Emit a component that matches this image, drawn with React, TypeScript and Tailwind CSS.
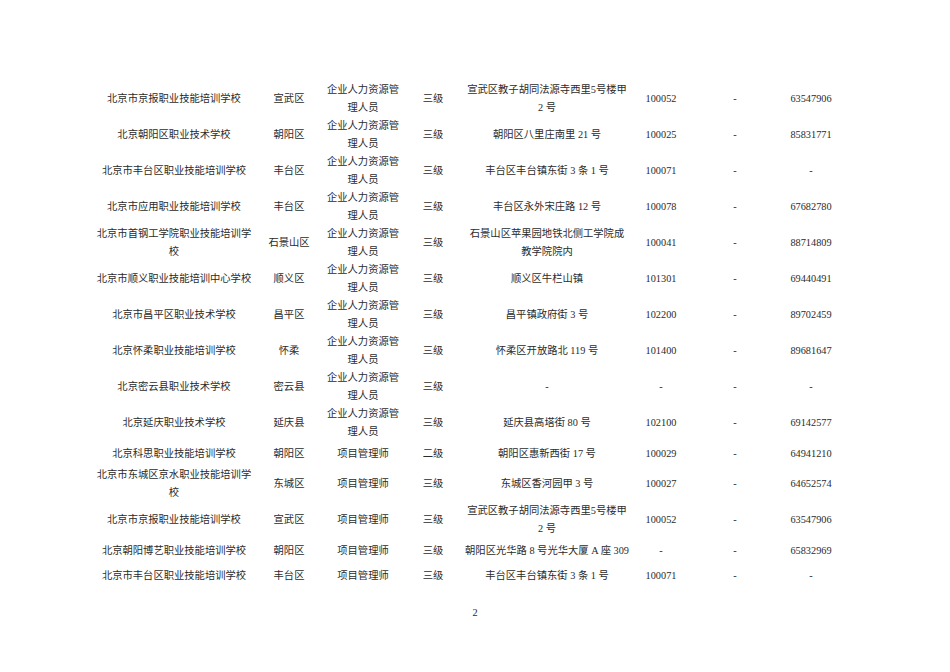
import React from "react";

const HR = ["企业人力资源管", "理人员"];
const PM = ["项目管理师"];

const rows: string[][][] = [
  [["北京市京报职业技能培训学校"], ["宣武区"], HR, ["三级"], ["宣武区教子胡同法源寺西里5号楼甲", "2 号"], ["100052"], ["-"], ["63547906"]],
  [["北京朝阳区职业技术学校"], ["朝阳区"], HR, ["三级"], ["朝阳区八里庄南里 21 号"], ["100025"], ["-"], ["85831771"]],
  [["北京市丰台区职业技能培训学校"], ["丰台区"], HR, ["三级"], ["丰台区丰台镇东街 3 条 1 号"], ["100071"], ["-"], ["-"]],
  [["北京市应用职业技能培训学校"], ["丰台区"], HR, ["三级"], ["丰台区永外宋庄路 12 号"], ["100078"], ["-"], ["67682780"]],
  [["北京市首钢工学院职业技能培训学", "校"], ["石景山区"], HR, ["三级"], ["石景山区苹果园地铁北侧工学院成", "教学院院内"], ["100041"], ["-"], ["88714809"]],
  [["北京市顺义职业技能培训中心学校"], ["顺义区"], HR, ["三级"], ["顺义区牛栏山镇"], ["101301"], ["-"], ["69440491"]],
  [["北京市昌平区职业技术学校"], ["昌平区"], HR, ["三级"], ["昌平镇政府街 3 号"], ["102200"], ["-"], ["89702459"]],
  [["北京怀柔职业技能培训学校"], ["怀柔"], HR, ["三级"], ["怀柔区开放路北 119 号"], ["101400"], ["-"], ["89681647"]],
  [["北京密云县职业技术学校"], ["密云县"], HR, ["三级"], ["-"], ["-"], ["-"], ["-"]],
  [["北京延庆职业技术学校"], ["延庆县"], HR, ["三级"], ["延庆县高塔街 80 号"], ["102100"], ["-"], ["69142577"]],
  [["北京科思职业技能培训学校"], ["朝阳区"], PM, ["二级"], ["朝阳区惠新西街 17 号"], ["100029"], ["-"], ["64941210"]],
  [["北京市东城区京水职业技能培训学", "校"], ["东城区"], PM, ["三级"], ["东城区香河园甲 3 号"], ["100027"], ["-"], ["64652574"]],
  [["北京市京报职业技能培训学校"], ["宣武区"], PM, ["三级"], ["宣武区教子胡同法源寺西里5号楼甲", "2 号"], ["100052"], ["-"], ["63547906"]],
  [["北京朝阳博艺职业技能培训学校"], ["朝阳区"], PM, ["三级"], ["朝阳区光华路 8 号光华大厦 A 座 309"], ["-"], ["-"], ["65832969"]],
  [["北京市丰台区职业技能培训学校"], ["丰台区"], PM, ["三级"], ["丰台区丰台镇东街 3 条 1 号"], ["100071"], ["-"], ["-"]],
];

export default function App() {
  return (
    <div
      className="w-[950px] h-[672px] bg-white text-[#2b2b2b] text-[10.3px] leading-[18px] overflow-hidden"
      style={{ fontFamily: '"Liberation Serif", "Noto Sans CJK SC", serif' }}
    >
      <div className="pt-[81px] pl-[96px]">
        {rows.map((r, i) => (
          <div
            key={i}
            className="grid grid-cols-[156px_74px_74px_66px_162px_66px_82px_70px] items-center min-h-[25px]"
          >
            {r.map((cell, j) => (
              <div key={j} className="flex flex-col items-center text-center whitespace-nowrap">
                {cell.map((line, k) => (
                  <span key={k}>{line}</span>
                ))}
              </div>
            ))}
          </div>
        ))}
      </div>
      <div className="mt-[16px] text-center">2</div>
    </div>
  );
}
